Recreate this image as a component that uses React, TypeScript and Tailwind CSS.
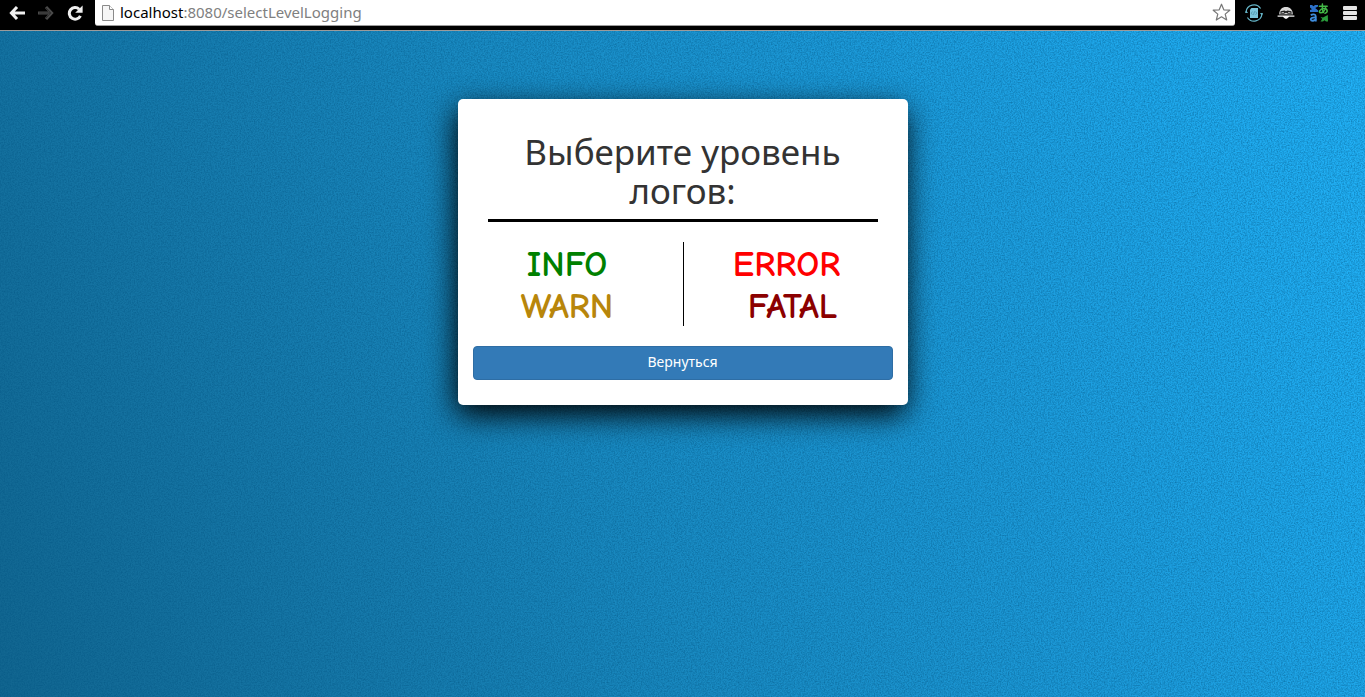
import React from 'react';

const levels = [
  [
    { name: 'INFO', color: 'text-[#008000]' },
    { name: 'WARN', color: 'text-[#b8860b]' },
  ],
  [
    { name: 'ERROR', color: 'text-[#ff0000]' },
    { name: 'FATAL', color: 'text-[#8b0000] pl-3' },
  ],
];

function BackIcon() {
  return (
    <svg width="16" height="14" viewBox="0 0 16 14" fill="none" stroke="currentColor" strokeWidth="3" aria-hidden="true">
      <path d="M8 1 2.4 7 8 13M3 7h13" />
    </svg>
  );
}

function ForwardIcon() {
  return (
    <svg width="16" height="14" viewBox="0 0 16 14" fill="none" aria-hidden="true">
      <path d="M8 1 13.6 7 8 13M13 7H0" stroke="#4a4a4a" strokeWidth="3" />
      <path d="M8 2 12.6 7 8 12M12.6 7H1" stroke="#2a2a2a" strokeWidth="1" />
    </svg>
  );
}

function ReloadIcon() {
  return (
    <svg width="16" height="16" viewBox="0 0 16 16" fill="none" aria-hidden="true">
      <path d="M12.2 4.2A5.8 5.8 0 1 0 13.4 10.8" stroke="currentColor" strokeWidth="3" />
      <path d="M15.6 0.4V7.8H8.2z" fill="currentColor" />
    </svg>
  );
}

function PageIcon() {
  return (
    <svg width="12" height="16" viewBox="0 0 12 16" aria-hidden="true">
      <path d="M.5.5h7l4 4v11H.5z" fill="#f6f6f6" stroke="#8a8a8a" />
      <path d="M7.5.5v4h4" fill="#fff" stroke="#8a8a8a" />
    </svg>
  );
}

function StarIcon() {
  return (
    <svg width="19" height="19" viewBox="0 0 19 19" aria-hidden="true">
      <path
        d="m9.5 1.2 2.3 5.6 6 .4-4.600 3.900 1.500 5.900-5.200-3.200L4.300 17l1.500-5.900L1.200 7.200l6-.4z"
        fill="#fff"
        stroke="#777"
        strokeWidth="1.200"
        strokeLinejoin="round"
      />
    </svg>
  );
}

function CodeSyncIcon() {
  return (
    <svg width="18" height="18" viewBox="0 0 18 18" aria-hidden="true">
      <g fill="none" stroke="#65b5c8" strokeWidth="1.200">
        <path d="M1 8A8 8 0 0 1 15.600 4.500" />
        <path d="M17 10A8 8 0 0 1 2.400 13.500" />
      </g>
      <path d="m0 9 1.200-2.800L3 9zM18 9l-1.200 2.800L15 9z" fill="#65b5c8" />
      <path d="M5 5.500 6.500 4H13v10H5z" fill="#7cc6dc" />
      <path d="M7.400 7.500 6.300 9.200l1.100 1.600M10.600 7.500l1.100 1.700-1.100 1.600M9.500 7.300l-1 3.800" fill="none" stroke="#3b8298" strokeWidth=".6" />
    </svg>
  );
}

function MaskIcon() {
  return (
    <svg width="18" height="14" viewBox="0 0 18 14" aria-hidden="true">
      <path d="M2.200 8.500C2.200 3.500 5 1 9 1s6.800 2.500 6.800 7.500z" fill="#d8d8d8" />
      <path d="M3.600 5.200 7.400 4.600 9 5.200l1.600-.6 3.800.6.3 2.600H11L9 6.800 7 7.800H3.300z" fill="#222" />
      <path d="M4.600 6.500h2.400M11 6.500h2.400" stroke="#aaa" />
      <path d="M2.600 8.900h12.800" stroke="#333" strokeWidth="1" />
      <path d="M.6 9.600h16.800v1.200h-5.200L9.800 12.800H8.200l-2.400-2H.6z" fill="#f5f5f5" />
    </svg>
  );
}

function TranslateIcon() {
  return (
    <svg width="20" height="20" viewBox="0 0 20 20" aria-hidden="true">
      <path d="M1 2h2l1.500 1.200L6 2h3v1.500L6.200 5 9.200 7.500V9H1V7l2-.8L1 4.500z" fill="#2c70c9" />
      <path d="M19 18.500h-2l-1.500-1.200-1.500 1.200h-2.500l1.800-2.600-1.800-2 2.500.6L18.800 12z" fill="#2a9c3c" />
      <g fill="none" stroke="#43b847" strokeWidth="1.500" strokeLinecap="round">
        <path d="M10.400 3.200h7.800M13.400 1c-.3 3.400-.1 6 .9 8.600" />
        <path d="M16.600 4.800c-1 3-3.200 5.100-5 5-2.400-.4-.8-4.100 3.200-4.200 3.800-.1 4.600 3.500 1.200 4.700" />
      </g>
      <g fill="none" stroke="#3f8ddd" strokeWidth="1.800">
        <path d="M1.800 12.300c1.800-1.400 5-1.200 5 1.100v5" />
        <path d="M6.800 14.500c-3.200-.2-5.200.4-5 2 .3 2 4.200 1.500 5-.6" />
      </g>
    </svg>
  );
}

function MenuIcon() {
  return (
    <svg width="14" height="14" viewBox="0 0 14 14" fill="#e4e4e4" aria-hidden="true">
      <rect width="14" height="4" rx="1" />
      <rect y="5" width="14" height="4" rx="1" />
      <rect y="10" width="14" height="4" rx="1" />
    </svg>
  );
}

function Toolbar() {
  return (
    <header className="flex h-[31px] items-start border-b border-[#9b9b9b] bg-black text-[#f0f0f0]">
      <div className="flex h-[26px] w-[95px] shrink-0 items-center gap-[13px] pl-[9px]">
        <button type="button" aria-label="Назад"><BackIcon /></button>
        <button type="button" aria-label="Вперёд" disabled><ForwardIcon /></button>
        <button type="button" aria-label="Обновить"><ReloadIcon /></button>
      </div>
      <div className="flex h-[26px] min-w-0 grow items-center rounded-b-[3px] border-b border-[#9b9b9b] bg-white pr-1 pl-[7px]">
        <PageIcon />
        <div className="ml-[6px] grow truncate pb-px font-['Noto_Sans',sans-serif] text-[15px] leading-5 text-[#808080]">
          <span className="text-black">localhost</span>:8080/selectLevelLogging
        </div>
        <button type="button" aria-label="Добавить в закладки"><StarIcon /></button>
      </div>
      <div className="flex h-[26px] shrink-0 items-center gap-[14px] pr-2 pl-[10px]">
        <button type="button" aria-label="Код"><CodeSyncIcon /></button>
        <button type="button" aria-label="Маска"><MaskIcon /></button>
        <button type="button" aria-label="Перевести"><TranslateIcon /></button>
        <button type="button" aria-label="Меню"><MenuIcon /></button>
      </div>
    </header>
  );
}

function FabricTexture() {
  return (
    <svg className="absolute inset-0 h-full w-full" aria-hidden="true">
      <filter id="fabric" x="0" y="0" width="100%" height="100%" colorInterpolationFilters="sRGB">
        <feTurbulence type="fractalNoise" baseFrequency="0.7" numOctaves="2" seed="4" />
        <feColorMatrix values="0 0 0 0 0  0 0 0 0 0.32  0 0 0 0 0.5  0.9 0 0 0 -0.3" />
      </filter>
      <rect width="100%" height="100%" filter="url(#fabric)" />
    </svg>
  );
}

export default function App() {
  return (
    <div className="flex min-h-screen flex-col">
      <Toolbar />
      <main className="relative grow bg-[linear-gradient(68deg,#11658f_0%,#1576a6_20%,#198bc3_45%,#1c9ad9_68%,#1faaee_88%,#22b3f8_100%)] px-4 pt-[68px] pb-16">
        <FabricTexture />
        <section className="relative mx-auto max-w-[450px] rounded-[5px] bg-white px-[15px] pt-[33px] pb-[25px] font-['Comic_Sans_MS','Comic_Neue','Noto_Sans',sans-serif] shadow-[-2px_10px_30px_0px_#000]">
          <div className="px-[15px]">
            <h1 className="border-b-[3px] border-black pb-[9px] text-center font-['Comic_Sans_MS','Noto_Sans',sans-serif] text-[35px] leading-[39px] text-[#333]">
              Выберите уровень логов:
            </h1>
            <div className="mt-5 grid grid-cols-2 text-center text-[36px] leading-[38px] font-bold">
              <div className="flex flex-col gap-1 pt-1 pr-9">
                {levels[0].map((level) => (
                  <a key={level.name} href="#" className={level.color}>{level.name}</a>
                ))}
              </div>
              <div className="flex flex-col gap-1 border-l border-black pt-1 pl-3">
                {levels[1].map((level) => (
                  <a key={level.name} href="#" className={level.color}>{level.name}</a>
                ))}
              </div>
            </div>
          </div>
          <button
            type="button"
            className="mt-5 block h-[34px] w-full rounded-[4px] border border-[#2e6da4] bg-[#337ab7] text-[14px] leading-5 text-white"
          >
            Вернуться
          </button>
        </section>
      </main>
    </div>
  );
}
